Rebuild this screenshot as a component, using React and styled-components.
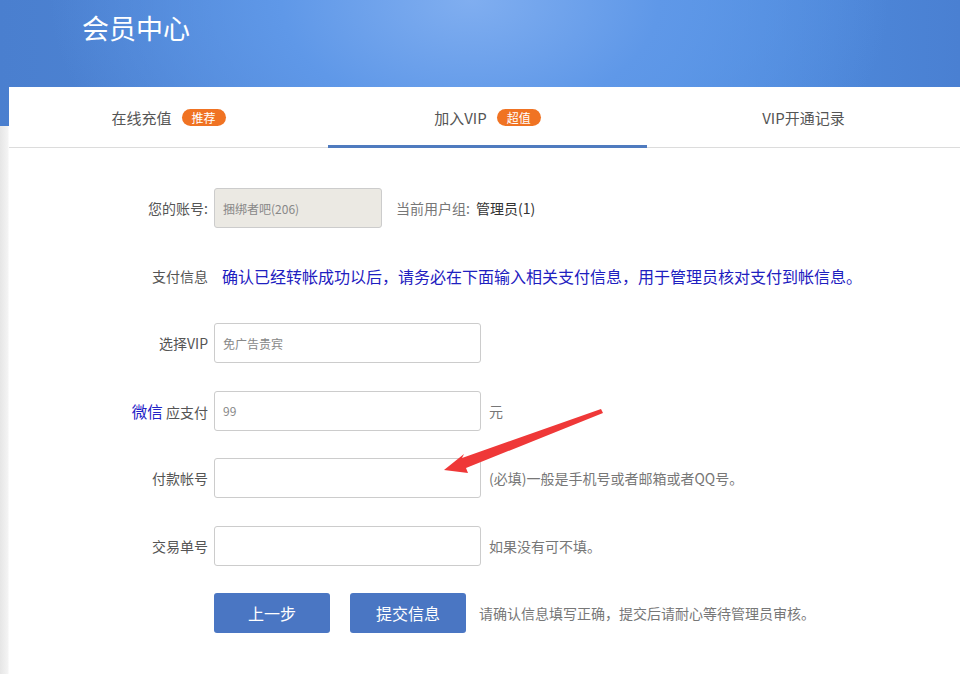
import React from "react";
import styled, { createGlobalStyle } from "styled-components";

const GlobalStyle = createGlobalStyle`
  html, body {
    margin: 0;
    padding: 0;
  }
  body {
    background: linear-gradient(90deg, #e6e6e6 0px, #f4f4f4 8px, #ffffff 9px);
    font-family: "Noto Sans CJK SC", "Noto Sans", sans-serif;
    color: #555;
  }
`;

const Page = styled.div`
  width: 960px;
  height: 674px;
  overflow: hidden;
  position: relative;
`;

const Header = styled.div`
  height: 126px;
  background:
    radial-gradient(ellipse 420px 260px at 470px 0px, #80aef0 0%, #5f98e8 45%, rgba(90, 145, 230, 0) 100%),
    linear-gradient(90deg, #4a7fcf 0%, #528ad9 45%, #5190e2 70%, #4a80d2 100%);
`;

const Title = styled.h1`
  margin: 0;
  padding: 10px 0 0 82px;
  font-size: 27px;
  line-height: 36px;
  font-weight: 400;
  color: #fff;
`;

const Card = styled.div`
  position: relative;
  margin: -39px 0 0 9px;
  background: #fff;
  min-height: 600px;
`;

const Tabs = styled.div`
  display: grid;
  grid-template-columns: 319px 319px 1fr;
  height: 61px;
  border-bottom: 1px solid #dcdcdc;
  box-sizing: border-box;
`;

const Tab = styled.div`
  position: relative;
  display: flex;
  align-items: center;
  justify-content: center;
  gap: 10px;
  font-size: 15px;
  color: #555;
  padding-top: 3px;
  box-sizing: border-box;
  border-bottom: 3px solid ${(p) => (p.$active ? "#4f7bbf" : "transparent")};
  margin-bottom: -1px;

  & + &::before {
    content: "";
    position: absolute;
    left: 0;
    top: 12px;
    height: 36px;
    width: 1px;
    background: linear-gradient(180deg, #fff 0%, #d8d8d8 50%, #fff 100%);
  }
`;

const Badge = styled.span`
  display: inline-block;
  padding: 0 10px;
  height: 17px;
  line-height: 17px;
  border-radius: 9px;
  background: #f07323;
  color: #fff;
  font-size: 12px;
`;

const Form = styled.div`
  display: flex;
  flex-direction: column;
  gap: 27.5px;
  padding-top: 40px;
`;

const Row = styled.div`
  display: grid;
  grid-template-columns: 199px 267px 1fr;
  column-gap: 6px;
  align-items: center;
  justify-items: start;
  height: 40px;
`;

const Label = styled.div`
  justify-self: end;
  text-align: right;
  font-size: 14px;
  color: #555;
  white-space: nowrap;
`;

const Blue = styled.span`
  color: #1f22c6;
  font-size: 15.5px;
`;

const Input = styled.div`
  width: ${(p) => p.$w || 267}px;
  height: 40px;
  box-sizing: border-box;
  border: 1px solid #cccccc;
  border-radius: 3px;
  background: ${(p) => (p.$readonly ? "#ebe9e3" : "#fff")};
  padding: 0 8px;
  display: flex;
  align-items: center;
  font-size: 12px;
  color: #888;
`;

const Field = styled.div`
  grid-column: 2 / 4;
  display: flex;
  align-items: center;
  gap: 12px;
`;

const Note = styled.div`
  font-size: 14px;
  color: #777;
  padding-left: 2px;
  white-space: nowrap;
`;

const Strong = styled.span`
  color: #333;
  margin-left: 6px;
`;

const Message = styled.div`
  grid-column: 2 / 4;
  padding-left: 8px;
  color: #1e20c0;
  font-size: 16px;
  white-space: nowrap;
`;

const Actions = styled.div`
  display: flex;
  align-items: center;
  gap: 20px;
  grid-column: 2 / 4;
`;

const Button = styled.button`
  width: 116px;
  height: 40px;
  border: none;
  border-radius: 3px;
  background: #4a76c3;
  color: #fff;
  font-family: inherit;
  font-size: 16px;
`;

const Hint = styled.span`
  font-size: 14px;
  color: #777;
  margin-left: -7px;
`;

const Arrow = styled.svg`
  position: absolute;
  left: 0;
  top: 0;
  pointer-events: none;
`;

export default function App() {
  return (
    <Page>
      <GlobalStyle />
      <Header>
        <Title>会员中心</Title>
      </Header>
      <Card>
        <Tabs>
          <Tab>
            在线充值<Badge>推荐</Badge>
          </Tab>
          <Tab $active>
            加入VIP<Badge>超值</Badge>
          </Tab>
          <Tab>VIP开通记录</Tab>
        </Tabs>
        <Form>
          <Row>
            <Label>您的账号:</Label>
            <Field>
              <Input $readonly $w={168}>捆绑者吧(206)</Input>
              <Note>
                当前用户组:<Strong>管理员(1)</Strong>
              </Note>
            </Field>
          </Row>
          <Row>
            <Label>支付信息</Label>
            <Message>确认已经转帐成功以后，请务必在下面输入相关支付信息，用于管理员核对支付到帐信息。</Message>
          </Row>
          <Row>
            <Label>选择VIP</Label>
            <Input>免广告贵宾</Input>
          </Row>
          <Row>
            <Label>
              <Blue>微信</Blue> 应支付
            </Label>
            <Input>99</Input>
            <Note>元</Note>
          </Row>
          <Row>
            <Label>付款帐号</Label>
            <Input />
            <Note>(必填)一般是手机号或者邮箱或者QQ号。</Note>
          </Row>
          <Row>
            <Label>交易单号</Label>
            <Input />
            <Note>如果没有可不填。</Note>
          </Row>
          <Row>
            <div />
            <Actions>
              <Button>上一步</Button>
              <Button>提交信息</Button>
              <Hint>请确认信息填写正确，提交后请耐心等待管理员审核。</Hint>
            </Actions>
          </Row>
        </Form>
      </Card>
      <Arrow width="960" height="674" viewBox="0 0 960 674">
        <path d="M601 409 L462 458 L464 454 L444 470 L468 473 L466 468 L603 413 Z" fill="#ef3838" />
      </Arrow>
    </Page>
  );
}
